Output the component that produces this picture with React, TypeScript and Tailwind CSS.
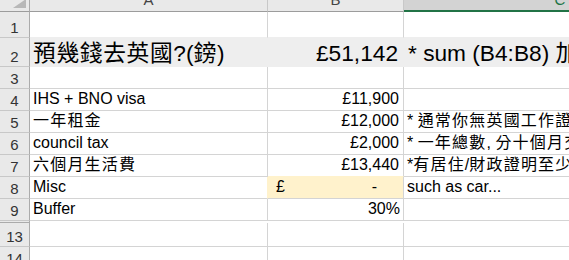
import React from "react";

const FONT = { fontFamily: '"Liberation Sans", "Noto Sans CJK TC", sans-serif' };

// Chinese runs are set a touch wider than the Noto default
function Zh({ children, big = false }: { children: React.ReactNode; big?: boolean }) {
  return <span className={big ? "tracking-[0.7px]" : "tracking-[1.2px]"}>{children}</span>;
}

type RowProps = {
  num: string;
  h: string;
  a?: React.ReactNode;
  b?: React.ReactNode;
  c?: React.ReactNode;
  aCls?: string;
  bCls?: string;
  cCls?: string;
};

function RowHead({ num, h }: { num: string; h: string }) {
  return (
    <div
      className={`${h} w-[30px] shrink-0 flex items-end justify-center bg-[#e9e9e9] border-r border-b border-r-[#ababab] border-b-[#c8c8c8] pb-[1px] text-[15px] leading-[17px] text-[#333]`}
    >
      {num}
    </div>
  );
}

function Row({ num, h, a, b, c, aCls = "", bCls = "", cCls = "" }: RowProps) {
  return (
    <div className="flex">
      <RowHead num={num} h={h} />
      <div
        className={`${h} w-[238px] shrink-0 flex items-end border-r border-b border-[#d4d4d4] pl-[3px] pb-[2px] text-[16px] leading-[18px] whitespace-nowrap ${aCls}`}
      >
        {a}
      </div>
      <div
        className={`${h} w-[136px] shrink-0 flex items-end justify-end border-r border-b border-[#d4d4d4] pr-[4px] pb-[2px] text-[16px] leading-[18px] whitespace-nowrap ${bCls}`}
      >
        {b}
      </div>
      <div
        className={`${h} w-[312px] shrink-0 flex items-end border-b border-[#d4d4d4] pl-[3px] pb-[2px] text-[16px] leading-[18px] whitespace-nowrap ${cCls}`}
      >
        {c}
      </div>
    </div>
  );
}

export default function App() {
  return (
    <div className="w-[569px] h-[260px] overflow-hidden bg-white text-black" style={FONT}>
      {/* column headers */}
      <div className="flex h-[12px]">
        <div className="relative w-[30px] shrink-0 bg-[#e9e9e9] border-r border-b border-r-[#ababab] border-b-[#9c9c9c] overflow-hidden">
          <svg className="absolute left-0 top-0" width="29" height="11" viewBox="0 0 29 11">
            <polygon points="13,8 26,-1 26,8" fill="#b8b8b8" />
          </svg>
        </div>
        <div className="w-[238px] shrink-0 flex justify-center items-start overflow-hidden bg-[#e9e9e9] border-r border-b border-r-[#c8c8c8] border-b-[#9c9c9c] text-[15px] leading-[15px] text-[#444]">
          <span className="mt-[-8px]">A</span>
        </div>
        <div className="w-[136px] shrink-0 flex justify-center items-start overflow-hidden bg-[#e9e9e9] border-r border-b border-r-[#c8c8c8] border-b-[#9c9c9c] text-[15px] leading-[15px] text-[#444]">
          <span className="mt-[-8px]">B</span>
        </div>
        <div className="w-[312px] shrink-0 flex justify-center items-start overflow-hidden bg-[#d3d3d3] border-b-2 border-b-[#217346] text-[15px] leading-[15px] text-[#217346]">
          <span className="mt-[-8px]">C</span>
        </div>
      </div>

      <Row num="1" h="h-[26px]" aCls="border-b-[#eeeeee]" bCls="border-b-[#eeeeee]" cCls="border-b-[#eeeeee]" />
      <Row
        num="2"
        h="h-[29px]"
        aCls="bg-[#eeeeee] border-[#eeeeee] !pb-0 !text-[22.7px] !leading-[26px]"
        bCls="bg-[#eeeeee] border-[#eeeeee] !pb-0 !pr-[5px] !text-[22.7px] !leading-[26px]"
        cCls="bg-[#eeeeee] border-[#eeeeee] !pb-0 !pl-[4px] !text-[22.7px] !leading-[26px]"
        a={
          <span>
            <Zh big>預幾錢去英國</Zh>?(<Zh big>鎊</Zh>)
          </span>
        }
        b="£51,142"
        c={
          <span>
            * sum (B4:B8) <Zh big>加</Zh> 30% buffer
          </span>
        }
      />
      <Row num="3" h="h-[22px]" />
      <Row num="4" h="h-[22px]" a="IHS + BNO visa" b="£11,900" />
      <Row
        num="5"
        h="h-[22px]"
        a={<Zh>一年租金</Zh>}
        b="£12,000"
        c={
          <span>
            * <Zh>通常你無英國工作證明</Zh>
          </span>
        }
      />
      <Row
        num="6"
        h="h-[22px]"
        a="council tax"
        b="£2,000"
        c={
          <span>
            * <Zh>一年總數</Zh>, <Zh>分十個月交</Zh>
          </span>
        }
      />
      <Row
        num="7"
        h="h-[22px]"
        a={<Zh>六個月生活費</Zh>}
        b="£13,440"
        bCls="border-b-[#fff2cc]"
        c={
          <span>
            *<Zh>有居住</Zh>/<Zh>財政證明至少六個月</Zh>
          </span>
        }
      />
      <Row
        num="8"
        h="h-[22px]"
        a="Misc"
        aCls="border-r-[#fff2cc]"
        bCls="bg-[#fff2cc] !justify-between !pl-[8px] !pr-[26px]"
        b={
          <>
            <span>£</span>
            <span>-</span>
          </>
        }
        c="such as car..."
      />
      <Row num="9" h="h-[22px]" a="Buffer" b="30%" bCls="!pr-[3px]" />

      {/* hidden rows 10-12 */}
      <div className="flex h-[2px]">
        <div className="w-[30px] shrink-0 bg-[#e9e9e9] border-r border-b border-r-[#ababab] border-b-[#ababab]" />
        <div className="flex-1 bg-white" />
      </div>

      <Row num="13" h="h-[24px]" />
      <Row num="14" h="h-[22px]" />
    </div>
  );
}
